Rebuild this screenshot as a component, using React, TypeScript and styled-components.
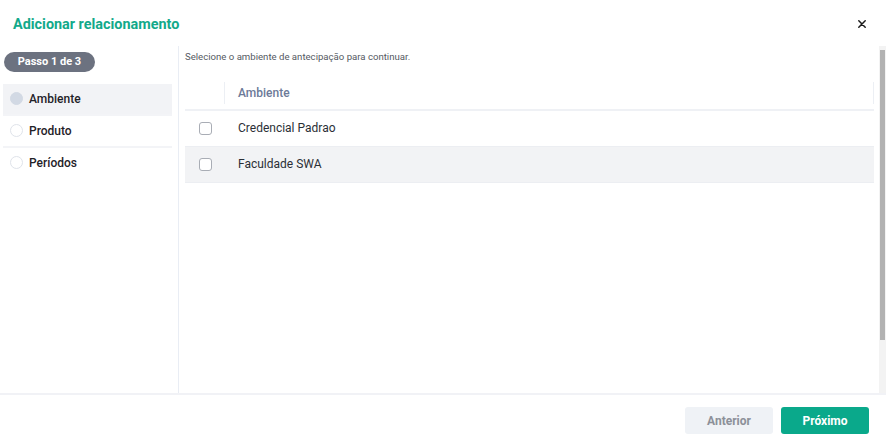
import React from 'react';
import styled, { createGlobalStyle } from 'styled-components';

const GlobalStyle = createGlobalStyle`
  html, body {
    margin: 0;
    padding: 0;
    background: #ffffff;
  }
  body {
    font-family: Roboto, 'Liberation Sans', sans-serif;
    color: #222;
  }
  * {
    box-sizing: border-box;
  }
`;

const Modal = styled.div`
  width: 886px;
  height: 446px;
  display: flex;
  flex-direction: column;
  background: #fff;
`;

const Header = styled.div`
  height: 46px;
  display: flex;
  align-items: center;
  justify-content: space-between;
  padding: 2px 20px 0 13px;
`;

const Title = styled.h2`
  margin: 0;
  font-size: 14.4px;
  font-weight: 700;
  color: #12a98a;
`;

const CloseButton = styled.button`
  border: 0;
  background: none;
  padding: 0;
  width: 8px;
  height: 8px;
  display: flex;
  align-items: center;
  justify-content: center;
  cursor: pointer;
`;

const Body = styled.div`
  flex: 1;
  display: flex;
  min-height: 0;
  border-bottom: 2px solid #f1f2f6;
`;

const Sidebar = styled.aside`
  width: 179px;
  flex-shrink: 0;
  border-right: 1px solid #e9edf4;
  padding: 4px 6px 0 3px;
`;

const StepBadge = styled.div`
  display: inline-flex;
  align-items: center;
  justify-content: center;
  width: 91px;
  height: 20px;
  margin-left: 1px;
  border-radius: 10px;
  background: #6c7280;
  color: #fff;
  font-size: 11px;
  font-weight: 700;
`;

const StepList = styled.ul`
  list-style: none;
  margin: 12px 0 0;
  padding: 0;
`;

const StepItem = styled.li<{ $active?: boolean }>`
  height: 32px;
  display: flex;
  align-items: center;
  gap: 6px;
  padding-left: 7px;
  background: ${({ $active }) => ($active ? '#f2f3f6' : 'transparent')};
  border-bottom: 2px solid #f3f4f7;
  background-clip: padding-box;
  font-size: 12px;
  font-weight: 500;
  color: #1f2228;

  &:last-child {
    border-bottom-color: transparent;
  }
`;

const StepDot = styled.span<{ $active?: boolean }>`
  width: 13px;
  height: 13px;
  border-radius: 50%;
  flex-shrink: 0;
  background: ${({ $active }) => ($active ? '#d2d9e4' : '#fff')};
  border: 1px solid ${({ $active }) => ($active ? '#d2d9e4' : '#dfe3ea')};
`;

const Main = styled.div`
  flex: 1;
  display: flex;
  min-width: 0;
`;

const Content = styled.section`
  flex: 1;
  overflow: hidden;
  padding: 5px 5px 0 6px;
`;

/* custom scrollbar rail on the right of the list */
const ScrollTrack = styled.div`
  width: 7px;
  flex-shrink: 0;
  background: #f3f3f3;
  padding: 4px 1px 0;
`;

const ScrollThumb = styled.div`
  height: 290px;
  background: #b2b2b2;
`;

const Hint = styled.p`
  margin: 0;
  font-size: 9.6px;
  line-height: 12px;
  color: #555a63;
`;

const Table = styled.table`
  width: 100%;
  margin-top: 13px;
  border-collapse: collapse;
`;

const HeadCell = styled.th<{ $narrow?: boolean }>`
  height: 34px;
  padding: 0 0 0 ${({ $narrow }) => ($narrow ? '0' : '13px')};
  width: ${({ $narrow }) => ($narrow ? '40px' : 'auto')};
  text-align: left;
  font-size: 12px;
  font-weight: 500;
  color: #6c7a98;
  border-bottom: 2px solid #eff1f5;
  position: relative;

  &::after {
    content: '';
    position: absolute;
    right: 0;
    top: 6px;
    bottom: 5px;
    width: 1px;
    background: #eceff4;
  }
`;

const Row = styled.tr<{ $shaded?: boolean }>`
  background: ${({ $shaded }) => ($shaded ? '#f2f3f5' : 'transparent')};
`;

const Cell = styled.td<{ $narrow?: boolean }>`
  height: 36px;
  padding: 0 0 0 ${({ $narrow }) => ($narrow ? '14px' : '13px')};
  font-size: 12px;
  color: #2b2f36;
  border-bottom: 1px solid #eceef2;
  vertical-align: middle;
`;

const Checkbox = styled.span`
  display: block;
  width: 13px;
  height: 13px;
  border: 1px solid #a9adb5;
  border-radius: 3px;
  background: #fff;
`;

const Footer = styled.footer`
  height: 51px;
  display: flex;
  align-items: center;
  justify-content: flex-end;
  gap: 8px;
  padding: 0 17px 0 0;
`;

const Button = styled.button<{ $primary?: boolean }>`
  width: 88px;
  height: 27px;
  border: 0;
  border-radius: 3px;
  font-family: Roboto, 'Liberation Sans', sans-serif;
  font-size: 12px;
  font-weight: 700;
  cursor: pointer;
  background: ${({ $primary }) => ($primary ? '#0aa98b' : '#eff2f6')};
  color: ${({ $primary }) => ($primary ? '#fff' : '#8c9099')};
`;

const steps = [
  { label: 'Ambiente', active: true },
  { label: 'Produto', active: false },
  { label: 'Períodos', active: false },
];

const ambientes = ['Credencial Padrao', 'Faculdade SWA'];

const App: React.FC = () => {
  return (
    <>
      <GlobalStyle />
      <Modal>
        <Header>
          <Title>Adicionar relacionamento</Title>
          <CloseButton aria-label="Fechar">
            <svg width="8" height="8" viewBox="0 0 8 8">
              <path d="M0.8 0.8 L7.2 7.2 M7.2 0.8 L0.8 7.2" stroke="#1c1c1c" strokeWidth="1.5" strokeLinecap="round" />
            </svg>
          </CloseButton>
        </Header>
        <Body>
          <Sidebar>
            <StepBadge>Passo 1 de 3</StepBadge>
            <StepList>
              {steps.map((s) => (
                <StepItem key={s.label} $active={s.active}>
                  <StepDot $active={s.active} />
                  {s.label}
                </StepItem>
              ))}
            </StepList>
          </Sidebar>
          <Main>
            <Content>
              <Hint>Selecione o ambiente de antecipação para continuar.</Hint>
              <Table>
                <thead>
                  <tr>
                    <HeadCell $narrow />
                    <HeadCell>Ambiente</HeadCell>
                  </tr>
                </thead>
                <tbody>
                  {ambientes.map((nome, i) => (
                    <Row key={nome} $shaded={i % 2 === 1}>
                      <Cell $narrow>
                        <Checkbox />
                      </Cell>
                      <Cell>{nome}</Cell>
                    </Row>
                  ))}
                </tbody>
              </Table>
            </Content>
            <ScrollTrack>
              <ScrollThumb />
            </ScrollTrack>
          </Main>
        </Body>
        <Footer>
          <Button>Anterior</Button>
          <Button $primary>Próximo</Button>
        </Footer>
      </Modal>
    </>
  );
};

export default App;
